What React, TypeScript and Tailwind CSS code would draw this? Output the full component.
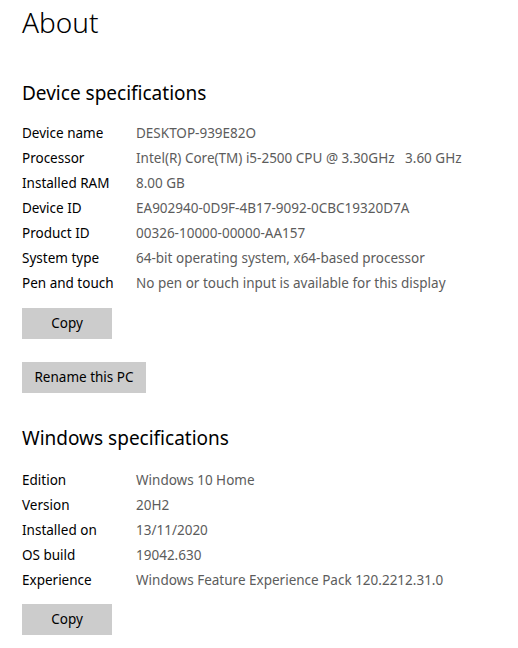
import * as React from "react";

const device = [
  ["Device name", "DESKTOP-939E82O"],
  ["Processor", "Intel(R) Core(TM) i5-2500 CPU @ 3.30GHz\u00a0\u00a0\u00a03.60 GHz"],
  ["Installed RAM", "8.00 GB"],
  ["Device ID", "EA902940-0D9F-4B17-9092-0CBC19320D7A"],
  ["Product ID", "00326-10000-00000-AA157"],
  ["System type", "64-bit operating system, x64-based processor"],
  ["Pen and touch", "No pen or touch input is available for this display"],
];

const windows = [
  ["Edition", "Windows 10 Home"],
  ["Version", "20H2"],
  ["Installed on", "13/11/2020"],
  ["OS build", "19042.630"],
  ["Experience", "Windows Feature Experience Pack 120.2212.31.0"],
];

function SpecRows({ rows }: { rows: string[][] }) {
  return (
    <div className="flex flex-col">
      {rows.map(([label, value]) => (
        <div key={label} className="flex h-[25px] items-center text-[13.5px]">
          <span className="w-[114px] shrink-0 text-[#000]">{label}</span>
          <span className="whitespace-nowrap text-[#5c5c5c]">{value}</span>
        </div>
      ))}
    </div>
  );
}

function Button({ children, className }: { children: React.ReactNode; className: string }) {
  return (
    <button className={"flex h-[31px] items-center justify-center bg-[#cccccc] text-[13.5px] text-black " + className}>
      {children}
    </button>
  );
}

export default function App() {
  return (
    <div className="h-[648px] w-[518px] overflow-hidden bg-white pl-[22px] text-black [font-family:'Noto_Sans','Open_Sans',sans-serif]">
      <h1 className="mt-[2px] text-[28px] font-light leading-[40px]">About</h1>
      <h2 className="mt-[37px] text-[19px] leading-[28px]">Device specifications</h2>
      <div className="mt-[14px]">
        <SpecRows rows={device} />
      </div>
      <Button className="mt-[12px] w-[90px]">Copy</Button>
      <Button className="mt-[23px] w-[124px]">Rename this PC</Button>
      <h2 className="mt-[31px] text-[19px] leading-[28px]">Windows specifications</h2>
      <div className="mt-[16px]">
        <SpecRows rows={windows} />
      </div>
      <Button className="mt-[11px] w-[90px]">Copy</Button>
    </div>
  );
}
